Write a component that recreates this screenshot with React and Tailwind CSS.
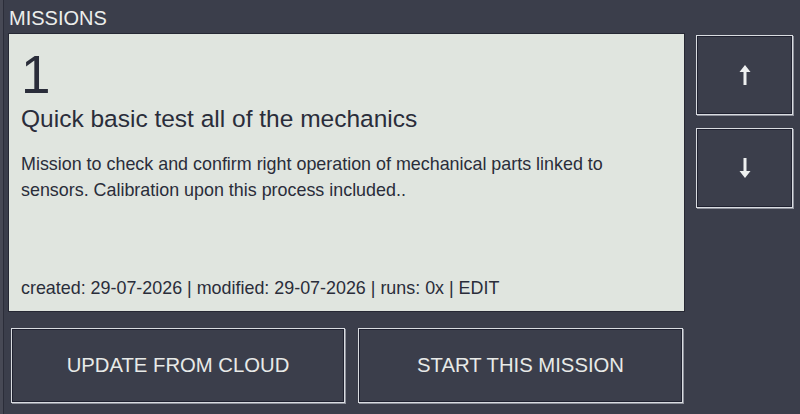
import React from 'react';

const font = { fontFamily: '"Liberation Sans", Arial, sans-serif' };

function ArrowUp() {
  return (
    <svg width="12" height="20" viewBox="0 0 12 20">
      <polygon points="6,0 11.5,7 0.5,7" fill="#eef0f0" />
      <rect x="4.5" y="6" width="3" height="14" fill="#eef0f0" />
    </svg>
  );
}

function ArrowDown() {
  return (
    <svg width="12" height="20" viewBox="0 0 12 20">
      <rect x="4.5" y="0" width="3" height="14" fill="#eef0f0" />
      <polygon points="6,20 11.5,13 0.5,13" fill="#eef0f0" />
    </svg>
  );
}

const btn =
  'flex items-center justify-center border border-[#d9dce1] bg-[#3b3e4b] shadow-[inset_0_0_0_1px_#1f2130,1px_1px_0_0_#8e919b] text-[#e8eae8]';

export default function App() {
  return (
    <div className="w-[800px] h-[414px] bg-[#474955] flex" style={font}>
      <div className="ml-[3px] flex-1 border-l border-[#2b2d39] bg-[#3b3e4b] flex flex-col">
        <div className="h-[33px] pl-[5px] pt-[8px] text-[20px] leading-[20px] text-[#eceeec]">
          MISSIONS
        </div>

        <div className="flex pl-[4px]">
          <div className="w-[677px] flex flex-col">
            <div className="h-[279px] border border-[#262834] bg-[#e0e5df] text-[#2a2d3a] flex flex-col pl-[12px] pt-[14px] pb-[10px]">
              <div className="text-[53px] leading-none">1</div>
              <div className="mt-[3px] text-[24.5px] leading-[30px]">
                Quick basic test all of the mechanics
              </div>
              <p className="mt-[17px] text-[17.9px] leading-[26px] pr-[60px]">
                Mission to check and confirm right operation of mechanical parts linked to
                sensors. Calibration upon this process included..
              </p>
              <div className="mt-auto text-[17.9px] leading-[26px]">
                created: 29-07-2026 | modified: 29-07-2026 | runs: 0x | EDIT
              </div>
            </div>

            <div className="mt-[16px] h-[75px] flex gap-[13px] pl-[3px] pr-[2px] text-[20.3px]">
              <button className={btn + ' w-[334px]'}>UPDATE FROM CLOUD</button>
              <button className={btn + ' flex-1'}>START THIS MISSION</button>
            </div>
          </div>

          <div className="ml-[11px] w-[97px] pt-[2px] flex flex-col gap-[13px]">
            <button className={btn + ' h-[80px]'}>
              <ArrowUp />
            </button>
            <button className={btn + ' h-[80px]'}>
              <ArrowDown />
            </button>
          </div>
        </div>
      </div>
    </div>
  );
}
